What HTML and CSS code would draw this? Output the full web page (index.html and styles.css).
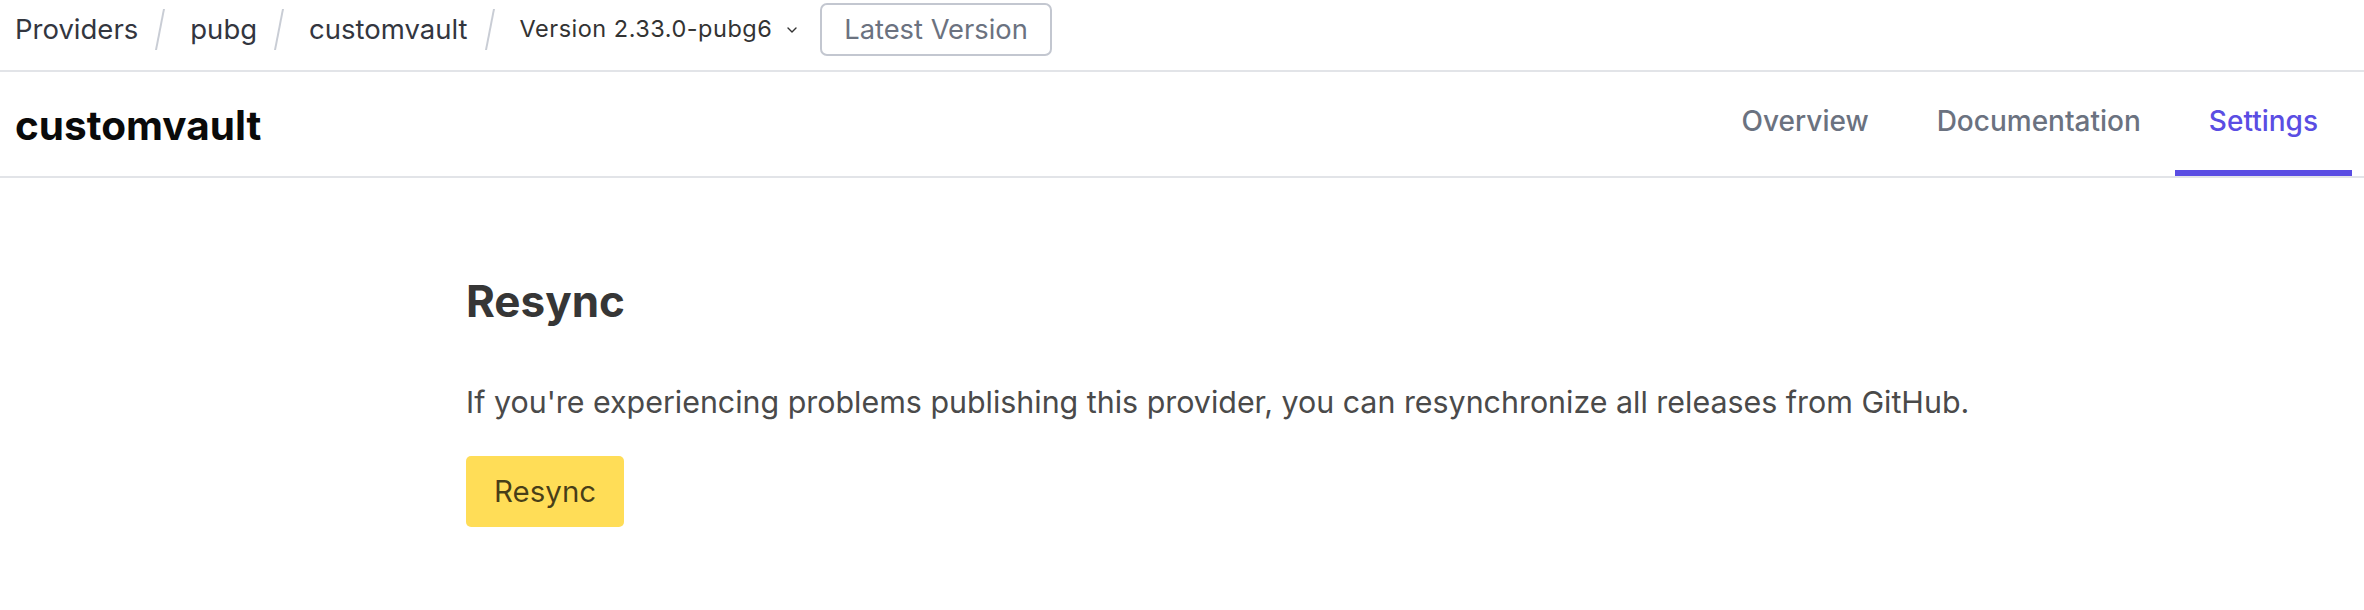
FILE: index.html
```html
<!DOCTYPE html>
<html lang="en">
<head>
<meta charset="utf-8">
<title>customvault - Settings</title>
<link rel="stylesheet" href="styles.css">
</head>
<body>
<nav class="crumbs">
  <a class="crumb" href="#">Providers</a>
  <span class="sep"></span>
  <a class="crumb" href="#">pubg</a>
  <span class="sep"></span>
  <a class="crumb" href="#">customvault</a>
  <span class="sep"></span>
  <button class="version">Version 2.33.0-pubg6
    <svg class="chev" viewBox="0 0 10 6" width="10" height="6"><polyline points="1,1 5,5 9,1" fill="none" stroke="#333" stroke-width="1.4" stroke-linecap="round" stroke-linejoin="round"/></svg>
  </button>
  <button class="latest">Latest Version</button>
</nav>
<header class="head">
  <h1 class="name">customvault</h1>
  <div class="tabs">
    <a class="tab" href="#">Overview</a>
    <a class="tab" href="#">Documentation</a>
    <a class="tab active" href="#">Settings</a>
  </div>
</header>
<main class="main">
  <h2 class="title">Resync</h2>
  <p class="text">If you're experiencing problems publishing this provider, you can resynchronize all releases from GitHub.</p>
  <button class="resync">Resync</button>
</main>
</body>
</html>
```
FILE: styles.css
```css
* { box-sizing: border-box; }
html, body { margin: 0; padding: 0; background: #fff; }
body { font-family: Inter, "Noto Sans", sans-serif; }
a { text-decoration: none; }

.crumbs {
  display: flex;
  align-items: center;
  height: 72px;
  padding: 0 0 12px 15px;
  border-bottom: 2px solid #e2e4e8;
}
.crumb {
  font-size: 27.5px;
  line-height: 30px;
  color: #33363f;
}
.sep {
  width: 2px;
  height: 41px;
  margin: 0 29px 0 21px;
  background: #c9cdd5;
  transform: skewX(-11deg);
}
.version {
  display: flex;
  align-items: center;
  gap: 15px;
  font-family: inherit;
  font-size: 23.5px;
  letter-spacing: 0.5px;
  line-height: 30px;
  color: #333;
  background: none;
  border: 0;
  padding: 0;
  margin-right: 23px;
}
.chev { margin-top: 2px; }
.latest {
  font-family: inherit;
  font-size: 27.3px;
  line-height: 30px;
  color: #6b7280;
  background: #fff;
  border: 2px solid #c3c7d0;
  border-radius: 7px;
  padding: 10px 22px;
  height: 53px;
}

.head {
  display: flex;
  justify-content: space-between;
  height: 106px;
  padding: 0 12px 0 15px;
  border-bottom: 2px solid #e2e4e8;
}
.name {
  margin: 0;
  padding-top: 4px;
  display: flex;
  align-items: center;
  font-size: 40.5px;
  line-height: 44px;
  font-weight: 700;
  color: #0a0a0a;
}
.tabs { display: flex; }
.tab {
  display: flex;
  align-items: center;
  padding: 0 34px;
  font-size: 28px;
  line-height: 30px;
  font-weight: 500;
  color: #6b7280;
  border-bottom: 6px solid transparent;
}
.tab.active {
  color: #5a4de3;
  border-bottom-color: #5a4de3;
}

.main {
  padding: 97px 0 0 466px;
}
.title {
  margin: 0 0 53px;
  font-size: 44px;
  line-height: 52px;
  font-weight: 700;
  color: #363636;
}
.text {
  margin: 0 0 31px;
  font-size: 30.4px;
  line-height: 45px;
  color: #4a4a4a;
}
.resync {
  font-family: inherit;
  font-size: 29.5px;
  line-height: 35px;
  color: rgba(0,0,0,0.72);
  background: #ffdd57;
  border: 0;
  border-radius: 5px;
  padding: 18px 28px;
  height: 71px;
}
```
